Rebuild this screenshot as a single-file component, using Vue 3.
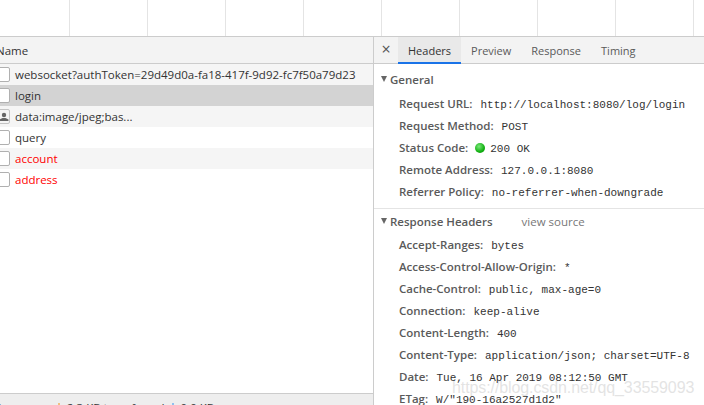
<script setup>
const gridLines = Array.from({ length: 9 });

const rows = [
  { name: 'websocket?authToken=29d49d0a-fa18-417f-9d92-fc7f50a79d23', cls: 'odd' },
  { name: 'login', cls: 'selected' },
  { name: 'data:image/jpeg;bas...', cls: 'odd', image: true },
  { name: 'query', cls: '' },
  { name: 'account', cls: 'odd error' },
  { name: 'address', cls: 'error' },
];

const tabs = ['Headers', 'Preview', 'Response', 'Timing'];

const general = [
  { key: 'Request URL:', value: 'http://localhost:8080/log/login' },
  { key: 'Request Method:', value: 'POST' },
  { key: 'Status Code:', value: '200 OK', dot: true },
  { key: 'Remote Address:', value: '127.0.0.1:8080' },
  { key: 'Referrer Policy:', value: 'no-referrer-when-downgrade' },
];

const response = [
  { key: 'Accept-Ranges:', value: 'bytes' },
  { key: 'Access-Control-Allow-Origin:', value: '*' },
  { key: 'Cache-Control:', value: 'public, max-age=0' },
  { key: 'Connection:', value: 'keep-alive' },
  { key: 'Content-Length:', value: '400' },
  { key: 'Content-Type:', value: 'application/json; charset=UTF-8' },
  { key: 'Date:', value: 'Tue, 16 Apr 2019 08:12:50 GMT' },
  { key: 'ETag:', value: 'W/"190-16a2527d1d2"' },
];
</script>

<template>
  <div class="app">
    <div class="timeline">
      <span v-for="(_, i) in gridLines" :key="i" class="tick"></span>
    </div>
    <div class="main">
      <section class="left">
        <div class="name-head">Name</div>
        <div class="list">
          <div v-for="r in rows" :key="r.name" class="row" :class="r.cls">
            <span class="file" :class="{ thumb: r.image }">
              <svg v-if="r.image" width="11" height="11" viewBox="0 0 11 11">
                <circle cx="6" cy="4" r="2.2" fill="#666" />
                <path d="M1.5 10 V8.6 L4.5 7 H7.5 L10.5 8.6 V10 Z" fill="#666" />
              </svg>
            </span>
            <span class="row-name">{{ r.name }}</span>
          </div>
        </div>
        <div class="status-bar">
          <span class="count">5 requests</span>
          <i class="sep up"></i>
          <span>2.3 KB transferred</span>
          <i class="sep down"></i>
          <span>0.0 KB</span>
        </div>
      </section>
      <section class="right">
        <div class="tabbar">
          <span class="close">×</span>
          <span v-for="(t, i) in tabs" :key="t" class="tab" :class="{ active: i === 0 }">{{ t }}</span>
        </div>
        <div class="details">
          <div class="block general">
            <div class="title"><i class="caret"></i>General</div>
            <div v-for="g in general" :key="g.key" class="pair">
              <b>{{ g.key }}</b>
              <i v-if="g.dot" class="dot"></i>
              <code>{{ g.value }}</code>
            </div>
          </div>
          <div class="block response">
            <div class="title"><i class="caret"></i>Response Headers<span class="source">view source</span></div>
            <div v-for="g in response" :key="g.key" class="pair">
              <b>{{ g.key }}</b>
              <code>{{ g.value }}</code>
            </div>
          </div>
        </div>
      </section>
    </div>
    <div class="watermark">https://blog.csdn.net/qq_33559093</div>
  </div>
</template>

<style scoped>
.app {
  position: relative;
  width: 704px;
  height: 405px;
  overflow: hidden;
  background: #fff;
  font-family: "Open Sans", "Noto Sans", sans-serif;
  font-size: 11.5px;
  color: #333;
}
.timeline {
  height: 36px;
  box-sizing: border-box;
  padding-left: 69px;
  display: flex;
}
.tick {
  flex: 0 0 78px;
  box-sizing: border-box;
  border-left: 1px solid #e4e4e4;
}
.main {
  display: flex;
  height: 380px;
  border-top: 1px solid #ccc;
}
.left {
  width: 373px;
  flex: none;
  display: flex;
  flex-direction: column;
  border-right: 1px solid #ccc;
}
.name-head {
  height: 26px;
  flex: none;
  line-height: 27px;
  background: #f3f3f3;
  border-bottom: 1px solid #ccc;
  text-indent: -4px;
  color: #333;
}
.list {
  height: 329px;
  flex: none;
}
.row {
  height: 21px;
  display: flex;
  align-items: center;
  white-space: nowrap;
  color: #333;
}
.row.odd {
  background: #f5f5f5;
}
.row.selected {
  background: #d3d3d3;
}
.row.error {
  color: #f00;
}
.file {
  width: 16px;
  height: 15px;
  flex: none;
  margin-left: -6px;
  margin-right: 4px;
  box-sizing: border-box;
  background: #fff;
  border: 1px solid #b0b0b0;
  border-radius: 2px;
  display: flex;
  align-items: center;
  justify-content: flex-end;
}
.file.thumb {
  background: #f5f5f5;
  border-color: #c4c4c4;
}
.row-name {
  margin-left: 1px;
}
.status-bar {
  height: 24px;
  flex: none;
  box-sizing: border-box;
  padding-top: 5px;
  line-height: 18px;
  background: #eee;
  border-top: 1px solid #ccc;
  display: flex;
  gap: 7px;
  align-items: flex-start;
}
.count {
  width: 51px;
  flex: none;
  margin-left: 0;
  text-indent: -5px;
}
.sep {
  width: 2px;
  height: 14px;
  margin-top: 4px;
  flex: none;
}
.sep.up {
  background: #f0c080;
}
.sep.down {
  background: #90c0f0;
}
.right {
  flex: 1;
  min-width: 0;
}
.tabbar {
  height: 26px;
  display: flex;
  align-items: stretch;
  background: #f3f3f3;
  border-bottom: 1px solid #ccc;
}
.close {
  width: 24px;
  flex: none;
  text-align: center;
  font-size: 16px;
  line-height: 25px;
  color: #555;
}
.tab {
  padding: 0 10px;
  line-height: 27px;
  font-size: 11px;
  color: #5a5a5a;
}
.tab.active {
  margin-bottom: -1px;
  background: #e9e9e9;
  color: #333;
  box-shadow: inset 0 -2px 0 #1a73e8;
}
.details {
  padding-top: 4px;
}
.block.general {
  padding-bottom: 5px;
  border-bottom: 1px solid #e4e4e4;
}
.block.general .title {
  margin-bottom: 3px;
}
.block.response .title {
  margin-top: 1px;
  margin-bottom: 2px;
}
.title {
  height: 22px;
  display: flex;
  align-items: center;
  padding-left: 7px;
  font-weight: 600;
  color: #5a5a5a;
  white-space: nowrap;
}
.caret {
  width: 0;
  height: 0;
  margin-right: 3px;
  border-left: 3.5px solid transparent;
  border-right: 3.5px solid transparent;
  border-top: 6px solid #666;
}
.source {
  margin-left: 29px;
  font-weight: 400;
  color: #777;
}
.pair {
  height: 22px;
  line-height: 22px;
  display: flex;
  align-items: baseline;
  padding-left: 25px;
  white-space: nowrap;
}
.pair b {
  font-weight: 600;
  color: #5a5a5a;
}
.pair code {
  margin-left: 8px;
  font-family: "Liberation Mono", monospace;
  font-size: 11px;
  color: #333;
}
.dot {
  width: 10px;
  height: 10px;
  margin-left: 7px;
  margin-right: -3px;
  align-self: center;
  border-radius: 50%;
  background: radial-gradient(circle at 40% 35%, #7be87b, #12b012 60%, #0a8a0a);
}
.watermark {
  position: absolute;
  left: 452px;
  top: 379px;
  font-family: "Liberation Sans", sans-serif;
  font-size: 16px;
  letter-spacing: -0.1px;
  white-space: nowrap;
  color: rgba(200, 200, 200, 0.5);
}
</style>
